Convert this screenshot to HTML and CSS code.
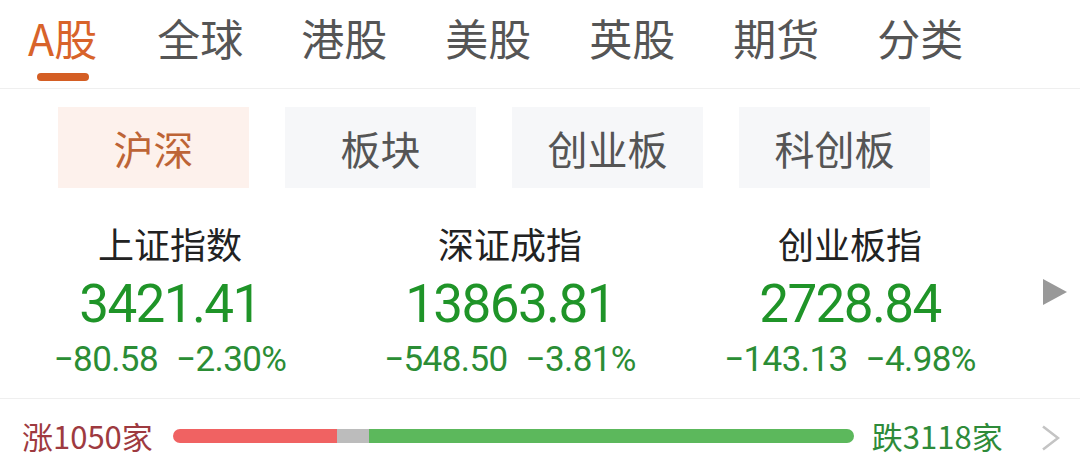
FILE: index.html
```html
<!DOCTYPE html>
<html lang="zh-CN">
<head>
<meta charset="utf-8">
<title>A股行情</title>
<link rel="stylesheet" href="styles.css">
</head>
<body>
<div class="page">
  <nav class="tabs">
    <div class="tab active">A股<span class="underline"></span></div>
    <div class="tab">全球</div>
    <div class="tab">港股</div>
    <div class="tab">美股</div>
    <div class="tab">英股</div>
    <div class="tab">期货</div>
    <div class="tab">分类</div>
  </nav>
  <div class="subtabs">
    <div class="subtab active">沪深</div>
    <div class="subtab">板块</div>
    <div class="subtab">创业板</div>
    <div class="subtab">科创板</div>
  </div>
  <section class="indices">
    <div class="index">
      <div class="name">上证指数</div>
      <div class="price">3421.41</div>
      <div class="change"><span>−80.58</span><span>−2.30%</span></div>
    </div>
    <div class="index">
      <div class="name">深证成指</div>
      <div class="price">13863.81</div>
      <div class="change"><span>−548.50</span><span>−3.81%</span></div>
    </div>
    <div class="index">
      <div class="name">创业板指</div>
      <div class="price">2728.84</div>
      <div class="change"><span>−143.13</span><span>−4.98%</span></div>
    </div>
    <div class="more">
      <svg width="24" height="26" viewBox="0 0 24 26"><polygon points="0,0 24,13 0,26" fill="#999"/></svg>
    </div>
  </section>
  <div class="breadth">
    <div class="up">涨1050家</div>
    <div class="bar">
      <div class="seg red" style="width:164px"></div>
      <div class="seg gray" style="width:32px"></div>
      <div class="seg green"></div>
    </div>
    <div class="down">跌3118家</div>
    <svg class="chev" width="19" height="26" viewBox="0 0 19 26"><polyline points="2,1.5 17,13 2,24.5" fill="none" stroke="#c4c4c4" stroke-width="2.6"/></svg>
  </div>
</div>
</body>
</html>
```
FILE: styles.css
```css
* { box-sizing: border-box; }
html, body { margin: 0; padding: 0; background: #fff; }
body {
  font-family: "Noto Sans CJK SC", "Noto Sans", sans-serif;
  width: 1080px;
  height: 473px;
  overflow: hidden;
}
.page { width: 1080px; }

.tabs {
  display: flex;
  gap: 58px;
  height: 89px;
  padding: 16px 0 0 28px;
  border-bottom: 1px solid #efefef;
}
.tab {
  position: relative;
  font-size: 43px;
  line-height: 43px;
  color: #555;
}
.tab.active { color: #d8632a; margin-right: 2px; }
.underline {
  position: absolute;
  left: 9px;
  top: 57px;
  width: 52px;
  height: 8px;
  border-radius: 4px;
  background: #d45e24;
}

.subtabs {
  display: flex;
  gap: 36px;
  padding: 18px 0 0 58px;
}
.subtab {
  width: 191px;
  height: 81px;
  display: flex;
  align-items: center;
  justify-content: center;
  font-size: 40px;
  color: #555;
  background: #f6f7f9;
}
.subtab.active { background: #fdf1ec; color: #bd6436; }

.indices {
  display: flex;
  padding: 35px 0 21px 0;
  border-bottom: 1px solid #efefef;
}
.index {
  width: 340px;
  text-align: center;
}
.name {
  font-size: 36px;
  line-height: 40px;
  color: #222;
}
.price {
  margin-top: 15px;
  font-family: Roboto, "Noto Sans", sans-serif;
  font-size: 53px;
  line-height: 53px;
  letter-spacing: -1.6px;
  color: #1f9428;
}
.change {
  margin-top: 12px;
  font-family: Roboto, "Noto Sans", sans-serif;
  font-size: 35px;
  line-height: 34px;
  letter-spacing: -0.6px;
  color: #2b8d35;
  display: flex;
  justify-content: center;
  gap: 18px;
}
.more {
  display: flex;
  align-items: center;
  padding: 0 0 16px 23px;
}

.breadth {
  display: flex;
  align-items: center;
  height: 73px;
  padding-left: 22px;
}
.up, .down {
  font-size: 31px;
  line-height: 30px;
  font-family: "Noto Sans CJK SC", sans-serif;
}
.up { color: #9e3a40; }
.down { color: #2e8b39; margin-left: 18px; }
.bar {
  margin-left: 20px;
  width: 681px;
  height: 14px;
  display: flex;
  border-radius: 7px;
  overflow: hidden;
}
.seg { height: 100%; }
.red { background: #f06262; }
.gray { background: #bcbcbc; }
.green { background: #5cb85c; flex: 1; }
.chev { margin-left: 38px; margin-top: 4px; }
```
